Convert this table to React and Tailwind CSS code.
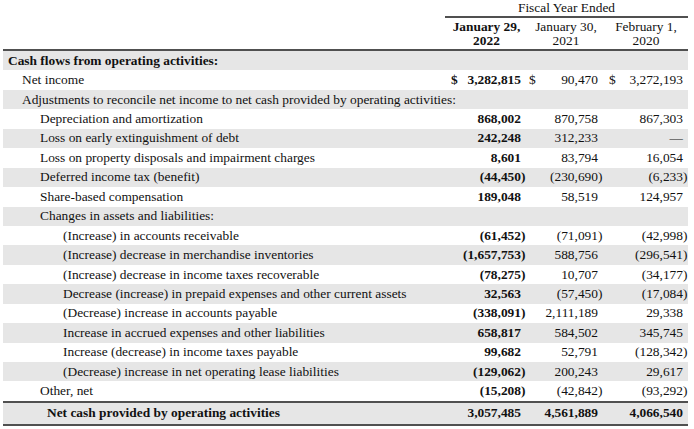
const rows = [
  { label: 'Cash flows from operating activities:', indent: 'pl-[5px]', bold: true },
  {
    label: 'Net income',
    indent: 'pl-[19px]',
    vals: ['3,282,815', '90,470', '3,272,193'],
    dollar: true,
  },
  {
    label: 'Adjustments to reconcile net income to net cash provided by operating activities:',
    indent: 'pl-[19px]',
  },
  { label: 'Depreciation and amortization', indent: 'pl-[37px]', vals: ['868,002', '870,758', '867,303'] },
  { label: 'Loss on early extinguishment of debt', indent: 'pl-[37px]', vals: ['242,248', '312,233', '—'] },
  {
    label: 'Loss on property disposals and impairment charges',
    indent: 'pl-[37px]',
    vals: ['8,601', '83,794', '16,054'],
  },
  { label: 'Deferred income tax (benefit)', indent: 'pl-[37px]', vals: ['(44,450)', '(230,690)', '(6,233)'] },
  { label: 'Share-based compensation', indent: 'pl-[37px]', vals: ['189,048', '58,519', '124,957'] },
  { label: 'Changes in assets and liabilities:', indent: 'pl-[37px]' },
  {
    label: '(Increase) in accounts receivable',
    indent: 'pl-[60px]',
    vals: ['(61,452)', '(71,091)', '(42,998)'],
  },
  {
    label: '(Increase) decrease in merchandise inventories',
    indent: 'pl-[60px]',
    vals: ['(1,657,753)', '588,756', '(296,541)'],
  },
  {
    label: '(Increase) decrease in income taxes recoverable',
    indent: 'pl-[60px]',
    vals: ['(78,275)', '10,707', '(34,177)'],
  },
  {
    label: 'Decrease (increase) in prepaid expenses and other current assets',
    indent: 'pl-[60px]',
    vals: ['32,563', '(57,450)', '(17,084)'],
  },
  {
    label: '(Decrease) increase in accounts payable',
    indent: 'pl-[60px]',
    vals: ['(338,091)', '2,111,189', '29,338'],
  },
  {
    label: 'Increase in accrued expenses and other liabilities',
    indent: 'pl-[60px]',
    vals: ['658,817', '584,502', '345,745'],
  },
  {
    label: 'Increase (decrease) in income taxes payable',
    indent: 'pl-[60px]',
    vals: ['99,682', '52,791', '(128,342)'],
  },
  {
    label: '(Decrease) increase in net operating lease liabilities',
    indent: 'pl-[60px]',
    vals: ['(129,062)', '200,243', '29,617'],
  },
  { label: 'Other, net', indent: 'pl-[37px]', vals: ['(15,208)', '(42,842)', '(93,292)'] },
]

// column boxes: width + where the $ sits
const cols = [
  { w: 'w-[83px]', pl: 'pl-[6px]', pr: 'pr-[2px]' },
  { w: 'w-[76px]', pl: 'pl-[1px]', pr: 'pr-[1px]' },
  { w: 'w-[84px]', pl: 'pl-[5px]', pr: 'pr-0' },
]

function Amount({ value, col, dollar, bold }) {
  const neg = value.endsWith(')')
  const shown = neg ? value.slice(0, -1) : value
  return (
    <div className={`flex shrink-0 justify-between ${col.w} ${col.pl} ${col.pr} ${bold ? 'font-bold' : ''}`}>
      <span>{dollar ? '$' : ''}</span>
      <span className="flex">
        <span>{shown}</span>
        <span className="inline-block w-[5px]">{neg ? ')' : ''}</span>
      </span>
    </div>
  )
}

function Row({ row, gray }) {
  return (
    <div className={`flex h-[19.45px] items-center ${gray ? 'bg-[#e6e6e6]' : 'bg-white'}`}>
      <div className={`min-w-0 flex-1 whitespace-nowrap ${row.indent} ${row.bold ? 'font-bold' : ''}`}>
        {row.label}
      </div>
      {row.vals &&
        row.vals.map((v, i) => (
          <Amount key={i} value={v} col={cols[i]} dollar={row.dollar} bold={i === 0} />
        ))}
    </div>
  )
}

export default function App() {
  return (
    <div
      className="h-[429px] w-[694px] overflow-hidden bg-white text-[13.4px] leading-[14px] text-[#111]"
      style={{ fontFamily: '"Liberation Serif", "Times New Roman", serif' }}
    >
      <div className="ml-[3px] w-[685px]">
        {/* header */}
        <div className="flex">
          <div className="flex-1" />
          <div className="w-[243px]">
            <div className="flex h-[16px] items-center justify-center">Fiscal Year Ended</div>
            <div className="h-[2px] bg-[#505050]" />
            <div className="flex h-[31px] items-center text-center">
              <div className="w-[83px] font-bold">
                <div>January 29,</div>
                <div>2022</div>
              </div>
              <div className="w-[76px]">
                <div>January 30,</div>
                <div>2021</div>
              </div>
              <div className="w-[84px]">
                <div>February 1,</div>
                <div>2020</div>
              </div>
            </div>
          </div>
        </div>
        <div className="h-[2px] bg-[#505050]" />

        {rows.map((row, i) => (
          <Row key={i} row={row} gray={i % 2 === 0} />
        ))}

        <div className="h-[2px] bg-[#505050]" />
        <div className="flex h-[21px] items-center bg-[#e6e6e6] font-bold">
          <div className="flex-1 whitespace-nowrap pl-[44px]">Net cash provided by operating activities</div>
          {['3,057,485', '4,561,889', '4,066,540'].map((v, i) => (
            <Amount key={i} value={v} col={cols[i]} bold />
          ))}
        </div>
        <div className="h-[2px] bg-[#505050]" />
      </div>
    </div>
  )
}
